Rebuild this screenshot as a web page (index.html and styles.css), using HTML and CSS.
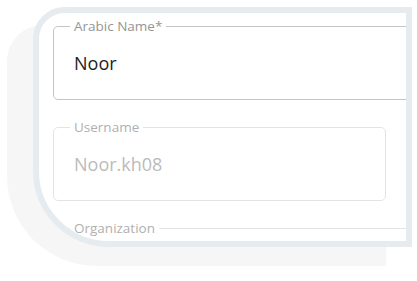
FILE: index.html
```html
<!DOCTYPE html>
<html lang="en">
<head>
    <meta charset="utf-8">
    <title>Profile form</title>
    <link rel="stylesheet" href="styles.css">
</head>
<body>

    <div class="stage">
        <div class="backdrop"></div>

        <div class="card">
            <fieldset class="field wide">
                <legend>Arabic Name*</legend>
                <div class="value">Noor</div>
            </fieldset>

            <fieldset class="field disabled">
                <legend>Username</legend>
                <div class="value">Noor.kh08</div>
            </fieldset>

            <fieldset class="field wide disabled">
                <legend>Organization</legend>
                <div class="value"></div>
            </fieldset>
        </div>
    </div>

</body>
</html>
```

FILE: styles.css
```css
body {
    margin: 0;
    background-color: #fff;
    font-family: "Open Sans", "Noto Sans", sans-serif;
}
.stage {
    display: grid;
    width: 417px;
    height: 281px;
}
.backdrop,
.card {
    grid-area: 1 / 1;
    box-sizing: border-box;
}
.backdrop {
    margin: 25px 0 0 7px;
    width: 379px;
    height: 241px;
    background-color: #f6f6f6;
    border-radius: 36px 0 0 90px;
}
.card {
    margin: 7px 0 0 33px;
    width: 379px;
    height: 240px;
    border: 6px solid #e6ebf0;
    border-radius: 32px 0 0 76px;
    background-color: #fff;
    overflow: hidden;
    padding: 6px 0 0 14px;
}
.field {
    box-sizing: border-box;
    margin: 0 0 20px;
    width: 333px;
    height: 81px;
    padding: 0 20px;
    border: 1px solid #c4c4c4;
    border-radius: 5px;
    min-width: 0;
}
.field.wide {
    width: 380px;
}
.field legend {
    margin-left: -4px;
    padding: 0 4px;
    font-size: 13.5px;
    line-height: 14px;
    color: #959595;
}
.value {
    margin-top: 19px;
    font-size: 18px;
    line-height: 22px;
    color: #222;
}
.field.disabled {
    border-color: #e3e3e3;
}
.field.disabled legend {
    color: #b0b0b0;
}
.field.disabled .value {
    color: #bbb;
}
```
